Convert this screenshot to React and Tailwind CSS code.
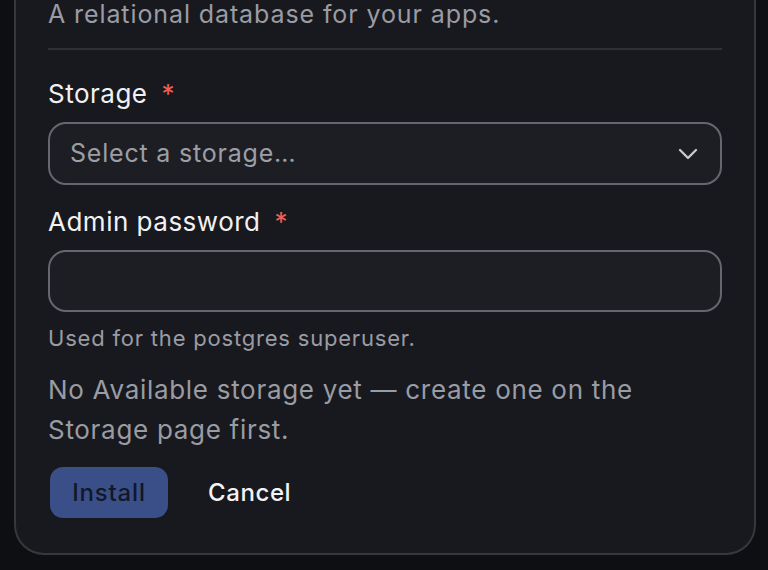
import React from "react";
import { ChevronDown } from "lucide-react";

function Label({ children }) {
  return (
    <div className="text-[26px] leading-[32px] tracking-[0.5px] text-[#f1f1f3] flex items-center">
      <span>{children}</span>
      <span className="ml-[14px] text-[#ee6256]">*</span>
    </div>
  );
}

export default function App() {
  return (
    <div
      className="w-[768px] h-[570px] overflow-hidden bg-[#0e0f12] pl-[14px] pr-[12px]"
      style={{ fontFamily: "Inter, 'Noto Sans', sans-serif" }}
    >
      <div className="bg-[#18191e] border-x-2 border-b-2 border-[#37383d] rounded-b-[30px] px-[32px] pb-[35px]">
        <p className="-mt-[2px] text-[25px] leading-[32px] tracking-[0.9px] text-[#9a9ca4]">
          A relational database for your apps.
        </p>
        <div className="mt-[18px] h-[2px] bg-[#2f3036]" />

        <div className="mt-[28px]">
          <Label>Storage</Label>
        </div>
        <button
          type="button"
          className="mt-[12px] w-full h-[63px] rounded-[18px] border-2 border-[#65676e] bg-[#1d1e23] pl-[20px] pr-[16px] flex items-center justify-between"
        >
          <span className="text-[25px] tracking-[0.8px] text-[#9c9ea6]">Select a storage…</span>
          <ChevronDown size={32} strokeWidth={1.75} className="text-[#c8cad0]" />
        </button>

        <div className="mt-[21px]">
          <Label>Admin password</Label>
        </div>
        <input
          type="password"
          className="mt-[12px] block w-full h-[62px] rounded-[18px] border-2 border-[#65676e] bg-[#1d1e23] px-[20px] outline-none"
        />
        <p className="mt-[12px] text-[22px] leading-[28px] tracking-[0.8px] text-[#9a9ca4]">
          Used for the postgres superuser.
        </p>

        <p className="mt-[18px] text-[26px] leading-[40px] tracking-[0.7px] text-[#9a9ca4]">
          No Available storage yet — create one on the
          <br />
          Storage page first.
        </p>

        <div className="mt-[17px] flex items-center">
          <button
            type="button"
            className="ml-[2px] w-[118px] h-[51px] rounded-[13px] bg-[#3a4f88] text-[24px] font-medium tracking-[0.8px] text-[#121729]"
          >
            Install
          </button>
          <button
            type="button"
            className="ml-[40px] text-[24px] font-medium tracking-[0.6px] text-[#f3f3f5]"
          >
            Cancel
          </button>
        </div>
      </div>
    </div>
  );
}
